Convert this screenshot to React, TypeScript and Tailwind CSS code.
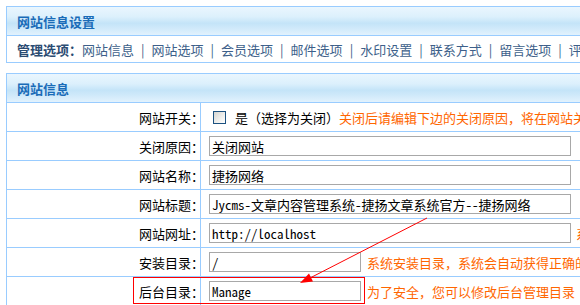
import React from 'react';

const navLinks = ['网站信息', '网站选项', '会员选项', '邮件选项', '水印设置', '联系方式', '留言选项', '评论选项'];

const headerBg =
  'bg-[linear-gradient(to_bottom,#eaf6fe_0%,#dcf0fc_35%,#c4e4f8_58%,#cfe9fa_75%,#e2f2fd_100%)]';

const Label: React.FC<{ text: string }> = ({ text }) => (
  <div className="w-[194px] h-full shrink-0 border-r border-[#99ccff] flex items-center justify-end text-black">
    <span className="-mr-[4px]">{text}</span>
  </div>
);

const TextInput: React.FC<{ value: string; width: string }> = ({ value, width }) => (
  <div
    className={`${width} h-[20px] border border-[#a8a8a8] flex items-center pl-[2px] text-black whitespace-nowrap overflow-hidden font-['Noto_Sans_Mono_CJK_SC','Liberation_Mono','Noto_Sans_CJK_SC',monospace] text-[13px] leading-none`}
  >
    {value}
  </div>
);

const Row: React.FC<{ label: string; children: React.ReactNode }> = ({ label, children }) => (
  <div className="h-[29px] border-t border-[#99ccff] flex">
    <Label text={label} />
    <div className="flex items-center pl-[8px] h-full whitespace-nowrap">{children}</div>
  </div>
);

export default function App() {
  return (
    <div className="relative w-[580px] h-[305px] overflow-hidden bg-white pt-[6px] pl-[6px] font-['Noto_Sans_CJK_SC',sans-serif] text-[13px] leading-none">
      {/* 设置 */}
      <div className="w-[700px] border border-[#99ccff]">
        <div className={`h-[28px] flex items-center pl-[10px] font-bold text-[#1a6cb8] ${headerBg}`}>
          网站信息设置
        </div>
        <div className="h-[27px] border-t border-[#99ccff] flex items-center pl-[10px] whitespace-nowrap">
          <span className="font-bold text-[#2b4c73]">管理选项：</span>
          {navLinks.map((link, i) => (
            <React.Fragment key={link}>
              {i > 0 && <span className="mx-[7px] text-[#3d5f8a]">|</span>}
              <span className="text-[#3d5f8a]">{link}</span>
            </React.Fragment>
          ))}
        </div>
      </div>

      {/* 网站信息 */}
      <div className="w-[700px] mt-[10px] border-x border-t border-[#99ccff]">
        <div className={`h-[28px] flex items-center pl-[10px] font-bold text-[#1a6cb8] ${headerBg}`}>
          网站信息
        </div>
        <Row label="网站开关：">
          <div className="ml-[4px] w-[13px] h-[13px] border border-[#1c5180] bg-[linear-gradient(135deg,#d4d4d0_0%,#f4f4f2_70%,#ffffff_100%)]" />
          <span className="ml-[9px] text-black">是（选择为关闭）</span>
          <span className="text-[#ff6600]">关闭后请编辑下边的关闭原因，将在网站关闭后显示给访问者</span>
        </Row>
        <Row label="关闭原因：">
          <TextInput value="关闭网站" width="w-[362px]" />
        </Row>
        <Row label="网站名称：">
          <TextInput value="捷扬网络" width="w-[362px]" />
        </Row>
        <Row label="网站标题：">
          <TextInput value="Jycms-文章内容管理系统-捷扬文章系统官方--捷扬网络" width="w-[362px]" />
        </Row>
        <Row label="网站网址：">
          <TextInput value="http://localhost" width="w-[362px]" />
          <span className="ml-[5px] text-[#ff6600]">系统网址，结尾不要加斜杠</span>
        </Row>
        <Row label="安装目录：">
          <TextInput value="/" width="w-[152px]" />
          <span className="ml-[6px] text-[#ff6600]">系统安装目录，系统会自动获得正确的路径</span>
        </Row>
        <Row label="后台目录：">
          <TextInput value="Manage" width="w-[152px]" />
          <span className="ml-[6px] text-[#ff6600]">为了安全，您可以修改后台管理目录（默认为Manage）</span>
        </Row>
      </div>

      {/* 标注 */}
      <div className="absolute left-[133px] top-[277px] w-[232px] h-[27px] border border-[#ff0000] pointer-events-none" />
      <svg className="absolute left-0 top-0 pointer-events-none" width="580" height="305" viewBox="0 0 580 305">
        <line x1="427" y1="218" x2="308" y2="279" stroke="#ff0000" strokeWidth="1" />
        <polygon points="300,283 313,281.5 309,273.5" fill="#ff0000" />
      </svg>
    </div>
  );
}
